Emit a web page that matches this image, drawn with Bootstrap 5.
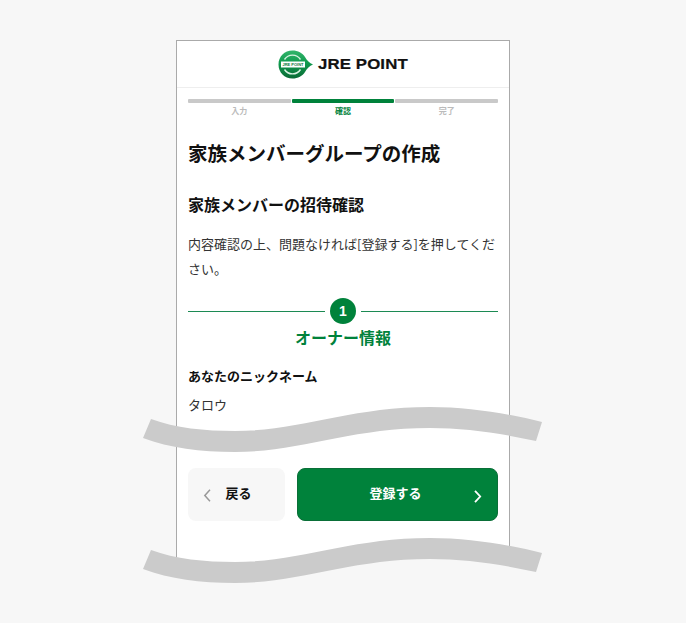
<!DOCTYPE html>
<html lang="ja">
<head>
<meta charset="utf-8">
<title>JRE POINT</title>
<link href="https://cdn.jsdelivr.net/npm/bootstrap@5.3.0/dist/css/bootstrap.min.css" rel="stylesheet">
<style>
html,body{height:623px;overflow:hidden}
body{background:#f7f7f7;font-family:"Noto Sans CJK JP","Liberation Sans",sans-serif;color:#222;font-size:13px;position:relative}
.frame{width:334px;height:530px;margin:40px auto 0;background:#fff;border:1px solid #aaa;border-bottom:0}
.brand{height:47px;border-bottom:1px solid #eee;gap:5px}
.brand-word{display:inline-block;width:90px;font-family:"Liberation Sans",sans-serif;font-weight:700;font-size:14px;letter-spacing:.1px;color:#111;line-height:1;white-space:nowrap;transform:scaleX(1.2);transform-origin:left center;-webkit-text-stroke:.2px #111}
.stepper{padding:11px 11px 0;gap:1px}
.stp{flex:1 1 0;text-align:center;font-size:8px;line-height:1;color:#bbb;font-weight:700}
.stp::before{content:"";display:block;height:4px;background:#c9c9c9;margin-bottom:4px;border-radius:1px}
.stp.on{color:#00823b}
.stp.on::before{background:#00823b}
.content{padding:0 11px}
.ttl{font-size:19.5px;font-weight:700;line-height:28px;margin:24px 0 0;color:#111;white-space:nowrap}
.sub{font-size:16px;font-weight:700;line-height:24px;margin:25px 0 0;color:#111}
.lead-txt{line-height:25px;margin:15px 0 0;color:#333}
.sec-head{margin-top:17px;gap:4px}
.sec-line{flex:1 1 0;height:1px;background:#1c8a53}
.sec-num{width:26px;height:26px;margin:0 1px;background:#00823b;color:#fff;font:700 14px/26px "Liberation Sans",sans-serif;text-align:center;border-radius:50%}
.sec-ttl{font-size:16px;font-weight:700;line-height:24px;color:#00823b;text-align:center;margin:1px 0 0}
.lbl{font-weight:700;line-height:20px;margin:17px 0 0;color:#111}
.val{line-height:20px;margin:9px 0 0;color:#333}
.acts{margin-top:53px;gap:12px}
.act{height:53px;border-radius:8px;font-size:13px;font-weight:700;line-height:1;position:relative;padding:0 0 4px}
.act-back{width:97px;background:#f7f7f7;border:0;color:#111}
.act-next{flex:1 1 0;background:#00823b;border:1px solid #0a6f38;color:#fff;padding-right:4px}
.act-next:hover,.act-next:active{background:#00823b!important;color:#fff!important}
.act svg{position:absolute;top:21px}
.act-back svg{left:15px}
.act-next svg{right:15px}
.back-txt{padding-left:4px}
.waves{position:absolute;left:0;top:0;width:686px;height:623px;pointer-events:none}
</style>
</head>
<body>
<div class="frame d-flex flex-column">
  <header class="brand d-flex align-items-center justify-content-center">
    <svg width="35" height="29" viewBox="0 0 35 29" aria-hidden="true">
      <defs>
        <linearGradient id="lg" x1="0" y1="0" x2="0" y2="1"><stop offset="0" stop-color="#33b56b"/><stop offset=".45" stop-color="#0f9a4e"/><stop offset="1" stop-color="#0a6a35"/></linearGradient>
      </defs>
      <path d="M14.5 .5C20 .5 24.500 3 27 7C29 10.500 31.500 13.200 35 14.500C31.500 15.800 29 18.500 27 22C24.500 26 20 28.500 14.500 28.500C6.500 28.500 .5 22.500 .5 14.500S6.500 .5 14.500 .5Z" fill="url(#lg)"/>
      <path d="M6.500 9.500A9.500 9.500 0 0 1 22.500 9.500" fill="none" stroke="#d9f2e2" stroke-width="1.400"/>
      <path d="M6.500 19.500A9.500 9.500 0 0 0 22.500 19.500" fill="none" stroke="#d9f2e2" stroke-width="1.400"/>
      <rect x="3" y="11.500" width="24" height="6" fill="#fff"/>
      <text x="15" y="16.200" text-anchor="middle" font-family="Liberation Sans" font-weight="700" font-size="4" fill="#0a7a3c">JRE POINT</text>
    </svg>
    <span class="brand-word">JRE POINT</span>
  </header>
  <div class="stepper d-flex">
    <div class="stp">入力</div>
    <div class="stp on">確認</div>
    <div class="stp">完了</div>
  </div>
  <main class="content">
    <h1 class="ttl">家族メンバーグループの作成</h1>
    <h2 class="sub">家族メンバーの招待確認</h2>
    <p class="lead-txt">内容確認の上、問題なければ[登録する]を押してください。</p>
    <div class="sec-head d-flex align-items-center">
      <span class="sec-line"></span><span class="sec-num">1</span><span class="sec-line"></span>
    </div>
    <h3 class="sec-ttl">オーナー情報</h3>
    <p class="lbl">あなたのニックネーム</p>
    <p class="val">タロウ</p>
    <div class="acts d-flex">
      <button type="button" class="btn act act-back">
        <svg width="9" height="13" viewBox="0 0 9 13" aria-hidden="true"><path d="M7 .8L1.800 6.500L7 12.200" fill="none" stroke="#999" stroke-width="1.500"/></svg>
        <span class="back-txt">戻る</span>
      </button>
      <button type="button" class="btn act act-next">
        登録する
        <svg width="9" height="13" viewBox="0 0 9 13" aria-hidden="true"><path d="M2 .8L7.200 6.500L2 12.200" fill="none" stroke="#fff" stroke-width="1.800"/></svg>
      </button>
    </div>
  </main>
</div>
<svg class="waves" viewBox="0 0 686 623" aria-hidden="true">
  <path d="M170 565L520 555V580H170Z" fill="#f7f7f7"/>
  <path d="M151 419C175 428 205 431 235 431C300 431 350 407 430 407C470 407 510 414 542 422L536 441C500 433 465 428 430 428C350 428 300 452 235 452C200 452 170 448 143 438Z" fill="#cbcbcb"/>
  <path d="M151 550C175 559 205 562 235 562C300 562 350 538 430 538C470 538 510 545 542 553L536 572C500 564 465 559 430 559C350 559 300 583 235 583C200 583 170 579 143 569Z" fill="#cbcbcb"/>
</svg>
<script src="https://cdn.jsdelivr.net/npm/bootstrap@5.3.0/dist/js/bootstrap.bundle.min.js"></script>
</body>
</html>
